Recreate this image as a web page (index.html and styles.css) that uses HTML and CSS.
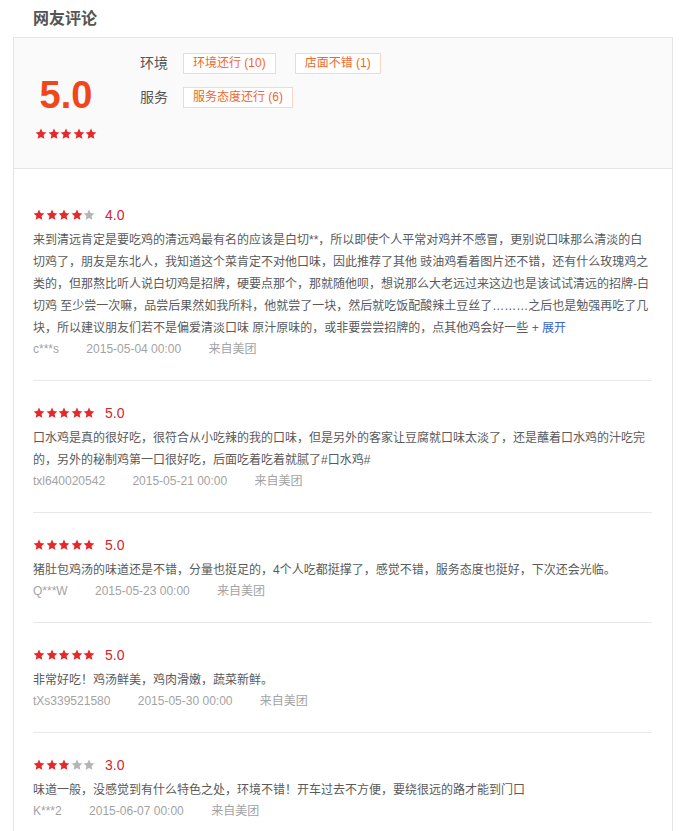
FILE: index.html
```html
<!DOCTYPE html>
<html lang="zh-CN">
<head>
    <meta charset="UTF-8">
    <meta name="viewport" content="width=device-width, initial-scale=1.0">
    <title>网友评论</title>
    <link rel="stylesheet" href="styles.css">
</head>
<body>
    <svg class="defs" width="0" height="0">
        <symbol id="star" viewBox="0 0 24 24">
            <path d="M12 1.2l3.2 7 7.6.8-5.7 5.1 1.6 7.5L12 17.8l-6.7 3.8 1.6-7.5L1.2 9l7.6-.8z"/>
        </symbol>
    </svg>

    <div class="page">
        <h2 class="title">网友评论</h2>

        <div class="comment-box">
            <!-- 总评分 -->
            <div class="summary">
                <div class="score-col">
                    <div class="big-score">5.0</div>
                    <div class="stars">
                        <svg class="on"><use href="#star"/></svg>
                        <svg class="on"><use href="#star"/></svg>
                        <svg class="on"><use href="#star"/></svg>
                        <svg class="on"><use href="#star"/></svg>
                        <svg class="on"><use href="#star"/></svg>
                    </div>
                </div>
                <div class="tag-col">
                    <div class="tag-row">
                        <span class="tag-label">环境</span>
                        <span class="tag">环境还行 (10)</span>
                        <span class="tag">店面不错 (1)</span>
                    </div>
                    <div class="tag-row">
                        <span class="tag-label">服务</span>
                        <span class="tag">服务态度还行 (6)</span>
                    </div>
                </div>
            </div>

            <!-- 评论列表 -->
            <div class="review-list">
                <div class="review">
                    <div class="review-rate">
                        <div class="stars">
                            <svg class="on"><use href="#star"/></svg>
                            <svg class="on"><use href="#star"/></svg>
                            <svg class="on"><use href="#star"/></svg>
                            <svg class="on"><use href="#star"/></svg>
                            <svg class="off"><use href="#star"/></svg>
                        </div>
                        <span class="rate-num">4.0</span>
                    </div>
                    <p class="review-text">来到清远肯定是要吃鸡的清远鸡最有名的应该是白切**，所以即使个人平常对鸡并不感冒，更别说口味那么清淡的白<br>切鸡了，朋友是东北人，我知道这个菜肯定不对他口味，因此推荐了其他 豉油鸡看着图片还不错，还有什么玫瑰鸡之<br>类的，但那熬比听人说白切鸡是招牌，硬要点那个，那就随他呗，想说那么大老远过来这边也是该试试清远的招牌-白<br>切鸡 至少尝一次嘛，品尝后果然如我所料，他就尝了一块，然后就吃饭配酸辣土豆丝了………之后也是勉强再吃了几<br>块，所以建议朋友们若不是偏爱清淡口味 原汁原味的，或非要尝尝招牌的，点其他鸡会好一些 <a class="more" href="#">+ 展开</a></p>
                    <div class="review-meta">
                        <span>c***s</span>
                        <span>2015-05-04 00:00</span>
                        <span>来自美团</span>
                    </div>
                </div>

                <div class="review">
                    <div class="review-rate">
                        <div class="stars">
                            <svg class="on"><use href="#star"/></svg>
                            <svg class="on"><use href="#star"/></svg>
                            <svg class="on"><use href="#star"/></svg>
                            <svg class="on"><use href="#star"/></svg>
                            <svg class="on"><use href="#star"/></svg>
                        </div>
                        <span class="rate-num">5.0</span>
                    </div>
                    <p class="review-text">口水鸡是真的很好吃，很符合从小吃辣的我的口味，但是另外的客家让豆腐就口味太淡了，还是蘸着口水鸡的汁吃完<br>的，另外的秘制鸡第一口很好吃，后面吃着吃着就腻了#口水鸡#</p>
                    <div class="review-meta">
                        <span>txl640020542</span>
                        <span>2015-05-21 00:00</span>
                        <span>来自美团</span>
                    </div>
                </div>

                <div class="review">
                    <div class="review-rate">
                        <div class="stars">
                            <svg class="on"><use href="#star"/></svg>
                            <svg class="on"><use href="#star"/></svg>
                            <svg class="on"><use href="#star"/></svg>
                            <svg class="on"><use href="#star"/></svg>
                            <svg class="on"><use href="#star"/></svg>
                        </div>
                        <span class="rate-num">5.0</span>
                    </div>
                    <p class="review-text">猪肚包鸡汤的味道还是不错，分量也挺足的，4个人吃都挺撑了，感觉不错，服务态度也挺好，下次还会光临。</p>
                    <div class="review-meta">
                        <span>Q***W</span>
                        <span>2015-05-23 00:00</span>
                        <span>来自美团</span>
                    </div>
                </div>

                <div class="review">
                    <div class="review-rate">
                        <div class="stars">
                            <svg class="on"><use href="#star"/></svg>
                            <svg class="on"><use href="#star"/></svg>
                            <svg class="on"><use href="#star"/></svg>
                            <svg class="on"><use href="#star"/></svg>
                            <svg class="on"><use href="#star"/></svg>
                        </div>
                        <span class="rate-num">5.0</span>
                    </div>
                    <p class="review-text">非常好吃！鸡汤鲜美，鸡肉滑嫩，蔬菜新鲜。</p>
                    <div class="review-meta">
                        <span>tXs339521580</span>
                        <span>2015-05-30 00:00</span>
                        <span>来自美团</span>
                    </div>
                </div>

                <div class="review">
                    <div class="review-rate">
                        <div class="stars">
                            <svg class="on"><use href="#star"/></svg>
                            <svg class="on"><use href="#star"/></svg>
                            <svg class="on"><use href="#star"/></svg>
                            <svg class="off"><use href="#star"/></svg>
                            <svg class="off"><use href="#star"/></svg>
                        </div>
                        <span class="rate-num">3.0</span>
                    </div>
                    <p class="review-text">味道一般，没感觉到有什么特色之处，环境不错！开车过去不方便，要绕很远的路才能到门口</p>
                    <div class="review-meta">
                        <span>K***2</span>
                        <span>2015-06-07 00:00</span>
                        <span>来自美团</span>
                    </div>
                </div>
            </div>
        </div>
    </div>
</body>
</html>
```

FILE: styles.css
```css
body {
    margin: 0;
    background: #fff;
    font-family: "Liberation Sans", "Noto Sans CJK SC", sans-serif;
    color: #555;
    text-spacing-trim: space-all;
    font-feature-settings: "chws" 0, "halt" 0;
}
.defs {
    position: absolute;
    width: 0;
    height: 0;
}
.page {
    padding: 0 16px 0 13px;
}
.title {
    margin: 0;
    padding-left: 20px;
    font-size: 16px;
    line-height: 37px;
    font-weight: bold;
    color: #555;
}
.comment-box {
    width: 660px;
    box-sizing: border-box;
    border: 1px solid #e5e5e5;
    border-bottom: none;
}
.summary {
    display: flex;
    height: 131px;
    box-sizing: border-box;
    padding: 15px 20px 0 20px;
    background-color: #fafafa;
    border-bottom: 1px solid #e5e5e5;
}
.score-col {
    width: 64px;
    flex-shrink: 0;
    margin-top: 20px;
    display: flex;
    flex-direction: column;
    align-items: center;
}
.big-score {
    font-size: 38px;
    line-height: 44px;
    font-weight: bold;
    color: #f0461c;
}
.score-col .stars {
    margin-top: 11px;
}
.stars {
    display: flex;
    gap: 0.5px;
}
.stars svg {
    width: 12px;
    height: 12px;
}
.stars .on {
    fill: #e6282b;
}
.stars .off {
    fill: #b5b5b5;
}
.tag-col {
    margin-left: 42px;
    display: flex;
    flex-direction: column;
    gap: 13px;
}
.tag-row {
    display: flex;
    align-items: center;
    gap: 19px;
    white-space: nowrap;
}
.tag-label {
    width: 28px;
    margin-right: -4px;
    flex-shrink: 0;
    font-size: 14px;
    line-height: 21px;
    color: #555;
}
.tag {
    padding: 0 9px;
    font-size: 12px;
    line-height: 19px;
    color: #f0682a;
    background: #fff;
    border: 1px solid #f7d8c8;
}
.review-list {
    padding: 14px 20px 0 19px;
}
.review {
    padding: 22px 0 21px;
    border-bottom: 1px solid #e8e8e8;
}
.review-rate {
    display: flex;
    align-items: center;
    gap: 10px;
    height: 20px;
}
.rate-num {
    font-size: 14px;
    line-height: 20px;
    color: #d9232c;
}
.review-text {
    margin: 4px -5px 0 0;
    font-size: 12px;
    line-height: 22px;
    color: #5a5a5a;
}
.more {
    color: #3a66c4;
    text-decoration: none;
}
.review-meta {
    font-size: 12px;
    line-height: 20px;
    color: #a3a3a3;
}
.review-meta span {
    margin-right: 24px;
}
```
